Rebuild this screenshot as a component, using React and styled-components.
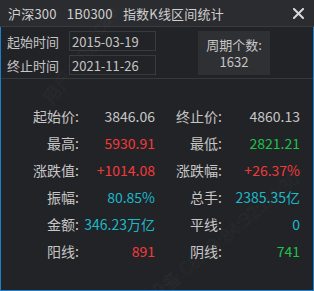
import React from "react";
import styled, { createGlobalStyle } from "styled-components";

const Global = createGlobalStyle`
  html, body { margin: 0; padding: 0; background: #222327; }
  body { font-family: "Noto Sans CJK SC", "Noto Sans", sans-serif; }
`;

const Window = styled.div`
  position: relative;
  width: 314px;
  height: 291px;
  box-sizing: border-box;
  background: #222327;
  overflow: hidden;
  display: flex;
  flex-direction: column;
  font-family: "Noto Sans CJK SC", "Noto Sans", sans-serif;
  font-size: 13px;
  color: #c6c6c6;
`;

const TitleBar = styled.div`
  height: 27px;
  flex: none;
  background: #2b2c30;
  border-bottom: 1px solid #3a3b3f;
  display: flex;
  align-items: center;
  justify-content: space-between;
  padding: 0 10px 0 8px;
  box-sizing: border-box;
`;

const Title = styled.div`
  font-size: 13px;
  letter-spacing: 0.2px;
  word-spacing: 2px;
  color: #cfcfcf;
  white-space: pre;
  line-height: 1;
`;

const Body = styled.div`
  flex: 1;
  border: 1px solid #1d7fd0;
  border-top: none;
  display: flex;
  flex-direction: column;
`;

const Header = styled.div`
  height: 52px;
  display: flex;
  border-bottom: 1px solid #37383c;
  padding: 4px 0 0 6px;
  box-sizing: border-box;
`;

const Fields = styled.div`
  display: flex;
  flex-direction: column;
  gap: 4px;
`;

const FieldRow = styled.div`
  display: flex;
  align-items: center;
  gap: 9px;
`;

const FieldLabel = styled.span`
  width: 53px;
  font-size: 13px;
  color: #c6c6c6;
`;

const Input = styled.div`
  width: 87px;
  height: 20px;
  box-sizing: border-box;
  border: 1px solid #393a3e;
  padding-left: 2px;
  display: flex;
  align-items: center;
  font-size: 13px;
  color: #c6c6c6;
`;

const PeriodBox = styled.div`
  margin-left: 42px;
  width: 72px;
  height: 44px;
  background: #2f3034;
  display: flex;
  flex-direction: column;
  align-items: center;
  justify-content: center;
  font-size: 13px;
  line-height: 17px;
  color: #c6c6c6;
`;

const Stats = styled.div`
  display: grid;
  grid-template-columns: 72px 76px 67px 78px;
  grid-auto-rows: 27px;
  padding: 23px 0 0 6px;
  align-items: center;
`;

const Label = styled.span`
  text-align: right;
  font-size: 14px;
  color: #c6c6c6;
`;

const Value = styled.span`
  text-align: right;
  font-size: 14px;
  color: ${(p) =>
    p.$tone === "red" ? "#f23a3a" : p.$tone === "green" ? "#1dc24c" : p.$tone === "cyan" ? "#1cb8c8" : "#c6c6c6"};
`;

const Watermark = styled.div`
  position: absolute;
  white-space: nowrap;
  font-size: 18px;
  color: transparent;
  -webkit-text-stroke: 0.5px rgba(255, 255, 255, 0.07);
  pointer-events: none;
  transform-origin: left center;
`;

const stats = [
  ["起始价:", "3846.06", "", "终止价:", "4860.13", ""],
  ["最高:", "5930.91", "red", "最低:", "2821.21", "green"],
  ["涨跌值:", "+1014.08", "red", "涨跌幅:", "+26.37%", "red"],
  ["振幅:", "80.85%", "cyan", "总手:", "2385.35亿", "cyan"],
  ["金额:", "346.23万亿", "cyan", "平线:", "0", "cyan"],
  ["阳线:", "891", "red", "阴线:", "741", "green"],
];

function CloseIcon() {
  return (
    <svg width="11" height="11" viewBox="0 0 11 11">
      <path d="M1 1 L10 10 M10 1 L1 10" stroke="#d8d8d8" strokeWidth="2" strokeLinecap="square" />
    </svg>
  );
}

export default function App() {
  return (
    <>
      <Global />
      <Window>
        <TitleBar>
          <Title>{"沪深300  1B0300  指数K线区间统计"}</Title>
          <CloseIcon />
        </TitleBar>
        <Body>
          <Header>
            <Fields>
              <FieldRow>
                <FieldLabel>起始时间</FieldLabel>
                <Input>2015-03-19</Input>
              </FieldRow>
              <FieldRow>
                <FieldLabel>终止时间</FieldLabel>
                <Input>2021-11-26</Input>
              </FieldRow>
            </Fields>
            <PeriodBox>
              <span>周期个数:</span>
              <span>1632</span>
            </PeriodBox>
          </Header>
          <Stats>
            {stats.map((r, i) => (
              <React.Fragment key={i}>
                <Label>{r[0]}</Label>
                <Value $tone={r[2]}>{r[1]}</Value>
                <Label>{r[3]}</Label>
                <Value $tone={r[5]}>{r[4]}</Value>
              </React.Fragment>
            ))}
          </Stats>
        </Body>
        <Watermark style={{ left: 46, top: 88, transform: "rotate(-55deg)" }}>用户 xingecao</Watermark>
        <Watermark style={{ left: 150, top: 284, transform: "rotate(-40deg)" }}>设备 C8:0B:84:92:D4:30</Watermark>
      </Window>
    </>
  );
}
